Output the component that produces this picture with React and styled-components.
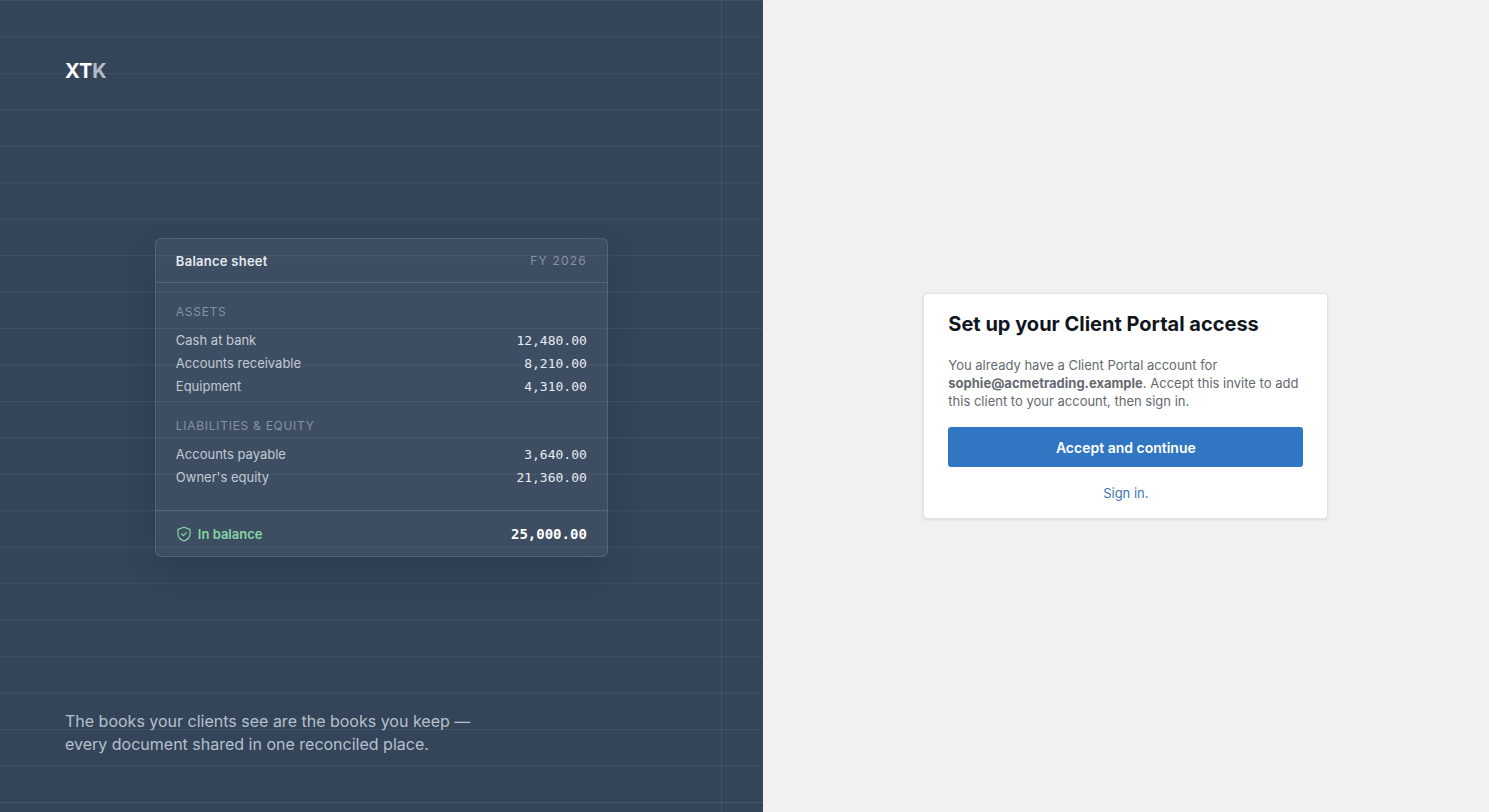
import React from 'react'
import styled, { createGlobalStyle } from 'styled-components'

const GlobalStyle = createGlobalStyle`
  * {
    box-sizing: border-box;
  }
  body {
    margin: 0;
    background: #f1f1f1;
    font-family: Inter, 'Liberation Sans', sans-serif;
    font-size: 13px;
  }
`

const Page = styled.div`
  display: grid;
  grid-template-columns: 1.05fr 1fr;
  min-height: 100vh;
`

const BrandPanel = styled.section`
  position: relative;
  display: flex;
  flex-direction: column;
  justify-content: space-between;
  padding: 57px 65px 56px;
  background: #34455a;
`

/* ledger paper: horizontal rules and a double margin line */
const Ruling = styled.div`
  position: absolute;
  inset: 0 0 9px;
  border-bottom: 1px solid rgba(255, 255, 255, 0.05);
  background-image: linear-gradient(
    rgba(255, 255, 255, 0.06) 1px,
    transparent 1px
  );
  background-size: 100% 36px;
  background-repeat: round;
`

const MarginLine = styled.div`
  position: absolute;
  top: 0;
  bottom: 0;
  right: 36px;
  width: 6px;
  border-left: 1px solid rgba(255, 255, 255, 0.08);
  border-right: 1px solid rgba(255, 255, 255, 0.02);
`

const Logo = styled.div`
  position: relative;
  color: #fff;
  font-size: 20px;
  font-weight: 700;
  line-height: 28px;
`

const LogoAccent = styled.span`
  color: #b0bdc8;
`

const Tagline = styled.p`
  position: relative;
  max-width: 430px;
  margin: 0;
  color: #b5c0cb;
  font-size: 16px;
  line-height: 23px;
`

const Sheet = styled.div`
  position: relative;
  align-self: center;
  width: 100%;
  max-width: 453px;
  border: 1px solid rgba(255, 255, 255, 0.12);
  border-radius: 6px;
  background: rgba(255, 255, 255, 0.05);
  box-shadow: 0 12px 32px rgba(0, 0, 0, 0.12);
`

const SheetHeader = styled.div`
  display: flex;
  align-items: center;
  justify-content: space-between;
  height: 44px;
  padding: 0 20px;
  border-bottom: 1px solid rgba(255, 255, 255, 0.14);
`

const SheetTitle = styled.h2`
  margin: 0;
  color: #e3e9ef;
  font-size: 13px;
  font-weight: 600;
  letter-spacing: 0.02em;
`

const Period = styled.span`
  color: #8492a1;
  font-size: 12px;
  letter-spacing: 0.1em;
`

const SheetBody = styled.div`
  display: grid;
  gap: 19px;
  padding: 20px 20px 21px;
`

const Entries = styled.table`
  width: 100%;
  border-collapse: collapse;
`

const Group = styled.caption`
  padding-bottom: 8px;
  color: #8492a1;
  font-size: 12px;
  letter-spacing: 0.06em;
  line-height: 18px;
  text-align: left;
`

const Account = styled.th`
  padding: 0;
  color: #c0cad4;
  font-size: 13px;
  font-weight: 400;
  line-height: 23px;
  text-align: left;
`

const Amount = styled.td`
  padding: 0;
  color: #e6edf4;
  font-family: 'DejaVu Sans Mono', monospace;
  font-size: 13px;
  line-height: 23px;
  text-align: right;
`

const SheetFooter = styled.div`
  display: flex;
  align-items: center;
  justify-content: space-between;
  height: 46px;
  padding: 0 20px;
  border-top: 1px solid rgba(255, 255, 255, 0.1);
`

const Status = styled.span`
  display: flex;
  align-items: center;
  gap: 6px;
  color: #86d3a5;
  font-size: 13px;
  font-weight: 600;
`

const Total = styled.strong`
  color: #fff;
  font-family: 'DejaVu Sans Mono', monospace;
  font-size: 14px;
  font-weight: 700;
`

const FormPanel = styled.main`
  display: flex;
  align-items: center;
  justify-content: center;
  padding: 24px;
`

const InviteCard = styled.div`
  width: 100%;
  max-width: 405px;
  padding: 17px 24px 15px;
  border: 1px solid #e2e3e4;
  border-radius: 4px;
  background: #fff;
  box-shadow: 0 1px 3px rgba(0, 0, 0, 0.1);
`

const Title = styled.h1`
  margin: 0 0 19px;
  color: #10161d;
  font-size: 20px;
  font-weight: 700;
  line-height: 26px;
`

const Message = styled.p`
  margin: 0 0 17px;
  color: #646a70;
  font-size: 13px;
  line-height: 18px;
`

const AcceptButton = styled.button`
  display: block;
  width: 100%;
  height: 40px;
  border: 0;
  border-radius: 3px;
  background: #3176c2;
  color: #fff;
  cursor: pointer;
  font-family: inherit;
  font-size: 14px;
  font-weight: 600;
`

const SignIn = styled.p`
  margin: 16px 0 0;
  line-height: 20px;
  text-align: center;
`

const SignInLink = styled.a`
  color: #3a78b4;
  font-size: 13px;
  text-decoration: none;
`

const groups = [
  {
    name: 'ASSETS',
    entries: [
      ['Cash at bank', '12,480.00'],
      ['Accounts receivable', '8,210.00'],
      ['Equipment', '4,310.00']
    ]
  },
  {
    name: 'LIABILITIES & EQUITY',
    entries: [
      ['Accounts payable', '3,640.00'],
      ["Owner's equity", '21,360.00']
    ]
  }
]

const ShieldIcon = () => (
  <svg
    width="16"
    height="16"
    viewBox="0 0 24 24"
    fill="none"
    stroke="currentColor"
    strokeWidth="1.8"
    strokeLinecap="round"
    strokeLinejoin="round"
    aria-hidden="true"
  >
    <path d="M12 1.8 21 5v7c0 5.2-3.8 8.6-9 10.4C6.8 20.6 3 17.2 3 12V5z" />
    <path d="m8.5 12 2.500 2.500 4.500-4.500" />
  </svg>
)

const BalanceSheet = () => (
  <Sheet>
    <SheetHeader>
      <SheetTitle>Balance sheet</SheetTitle>
      <Period>FY 2026</Period>
    </SheetHeader>
    <SheetBody>
      {groups.map(({ name, entries }) => (
        <Entries key={name}>
          <Group>{name}</Group>
          <tbody>
            {entries.map(([account, amount]) => (
              <tr key={account}>
                <Account scope="row">{account}</Account>
                <Amount>{amount}</Amount>
              </tr>
            ))}
          </tbody>
        </Entries>
      ))}
    </SheetBody>
    <SheetFooter>
      <Status>
        <ShieldIcon />
        In balance
      </Status>
      <Total>25,000.00</Total>
    </SheetFooter>
  </Sheet>
)

const App = () => (
  <>
    <GlobalStyle />
    <Page>
      <BrandPanel>
        <Ruling />
        <MarginLine />
        <Logo>
          XT<LogoAccent>K</LogoAccent>
        </Logo>
        <BalanceSheet />
        <Tagline>
          The books your clients see are the books you keep — every document
          shared in one reconciled place.
        </Tagline>
      </BrandPanel>
      <FormPanel>
        <InviteCard>
          <Title>Set up your Client Portal access</Title>
          <Message>
            You already have a Client Portal account for{' '}
            <strong>sophie@acmetrading.example</strong>. Accept this invite to
            add this client to your account, then sign in.
          </Message>
          <AcceptButton type="button">Accept and continue</AcceptButton>
          <SignIn>
            <SignInLink href="#sign-in">Sign in.</SignInLink>
          </SignIn>
        </InviteCard>
      </FormPanel>
    </Page>
  </>
)

export default App
